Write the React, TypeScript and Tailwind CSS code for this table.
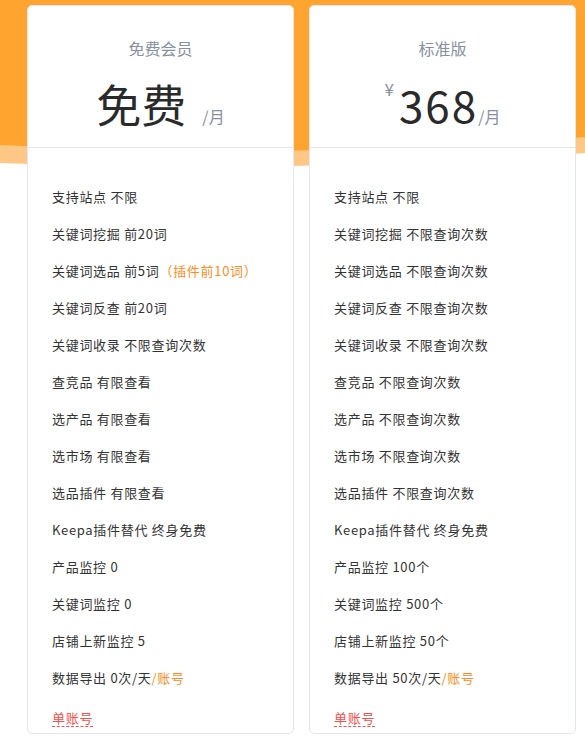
const plans = [
  {
    name: '免费会员',
    free: true,
    price: '免费',
    rows: [
      ['支持站点', '不限'],
      ['关键词挖掘', '前20词'],
      ['关键词选品', '前5词', '（插件前10词）'],
      ['关键词反查', '前20词'],
      ['关键词收录', '不限查询次数'],
      ['查竞品', '有限查看'],
      ['选产品', '有限查看'],
      ['选市场', '有限查看'],
      ['选品插件', '有限查看'],
      ['Keepa插件替代', '终身免费'],
      ['产品监控', '0'],
      ['关键词监控', '0'],
      ['店铺上新监控', '5'],
      ['数据导出', '0次/天', '/账号'],
    ],
  },
  {
    name: '标准版',
    free: false,
    price: '368',
    rows: [
      ['支持站点', '不限'],
      ['关键词挖掘', '不限查询次数'],
      ['关键词选品', '不限查询次数'],
      ['关键词反查', '不限查询次数'],
      ['关键词收录', '不限查询次数'],
      ['查竞品', '不限查询次数'],
      ['选产品', '不限查询次数'],
      ['选市场', '不限查询次数'],
      ['选品插件', '不限查询次数'],
      ['Keepa插件替代', '终身免费'],
      ['产品监控', '100个'],
      ['关键词监控', '500个'],
      ['店铺上新监控', '50个'],
      ['数据导出', '50次/天', '/账号'],
    ],
  },
]

function PlanCard({ plan }: { plan: (typeof plans)[number] }) {
  return (
    <div className="w-[267px] shrink-0 bg-white border border-[#e4e6ef] rounded-[5px]">
      <div className="h-[142px] border-b border-[#e4e6ef] flex flex-col items-center pt-[31px]">
        <div className="text-[16px] leading-[22px] text-[#8790a0]">{plan.name}</div>
        {plan.free ? (
          <div className="flex items-end mt-[22px] text-[#2a2a2a]">
            <span className="text-[45px] leading-[46px]">{plan.price}</span>
            <span className="text-[16px] leading-[20px] text-[#8790a0] ml-[16px] mb-[1px]">/月</span>
          </div>
        ) : (
          <div className="flex items-end mt-[22px] text-[#2a2a2a]">
            <span className="self-start text-[17px] leading-[18px] text-[#8790a0] mr-[5px] mt-[-1px]">¥</span>
            <span className="text-[44px] leading-[46px] tracking-[2px]">{plan.price}</span>
            <span className="text-[16px] leading-[20px] text-[#8790a0] mb-[1px]">/月</span>
          </div>
        )}
      </div>
      <div className="pt-[30px] pl-[24px] text-[13px] tracking-[0.7px] text-[#333]">
        {plan.rows.map(([label, value, extra]) => (
          <div key={label} className="h-[37px] leading-[37px] whitespace-nowrap">
            {label}&nbsp;{value}
            {extra && <span className="text-[#ff8c1a]">{extra}</span>}
          </div>
        ))}
        <div className="h-[37px] flex items-center">
          <span className="inline-block leading-[17px] text-[#f5504a] border-b border-dashed border-[#f5504a] mt-[6px]">
            单账号
          </span>
        </div>
      </div>
    </div>
  )
}

export default function App() {
  return (
    <div
      className="relative w-[585px] h-[736px] overflow-hidden bg-white"
      style={{ fontFamily: '"Noto Sans CJK SC", "Noto Sans", sans-serif' }}
    >
      <svg className="absolute top-0 left-0" width="585" height="180" viewBox="0 0 585 180">
        <path d="M0 0 H585 V153 Q300 174 0 163 Z" fill="#ffc785" />
        <path d="M0 0 H585 V137 Q300 160 0 145 Z" fill="#ffa52f" />
      </svg>
      <div className="relative flex gap-[15px] pl-[27px] pt-[5px]">
        {plans.map((p) => (
          <PlanCard key={p.name} plan={p} />
        ))}
      </div>
    </div>
  )
}
